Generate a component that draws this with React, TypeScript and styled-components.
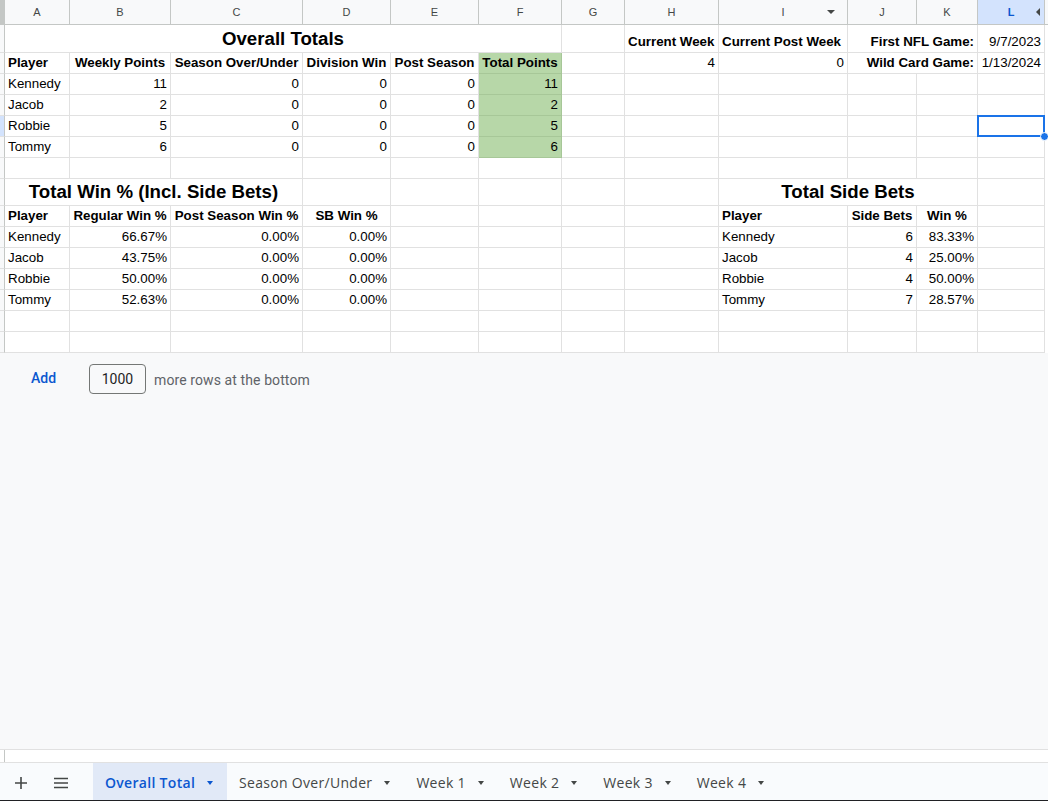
import React from "react";
import styled, { createGlobalStyle } from "styled-components";

const Global = createGlobalStyle`
  html, body { margin: 0; padding: 0; background: #ffffff; }
  body { font-family: "Liberation Sans", Arial, sans-serif; overflow: hidden; }
`;

const COLS = [5, 65, 101, 132, 88, 88, 83, 63, 94, 129, 69, 61, 67, 3];
const LETTERS = ["A", "B", "C", "D", "E", "F", "G", "H", "I", "J", "K", "L"];

const Page = styled.div`
  width: 1048px;
  height: 801px;
  display: flex;
  flex-direction: column;
  background: #f8f9fa;
`;

const Sheet = styled.div`
  display: grid;
  grid-template-columns: ${COLS.map((c) => `${c}px`).join(" ")};
  grid-template-rows: 25px 28px repeat(6, 21px) 27px repeat(7, 21px);
  background: #ffffff;
  flex: none;
`;

const Corner = styled.div`
  background: #c4c7c5;
  border-bottom: 1px solid #c4c7c5;
`;

const ColHead = styled.div<{ $active?: boolean }>`
  box-sizing: border-box;
  position: relative;
  display: flex;
  align-items: center;
  justify-content: center;
  background: ${(p) => (p.$active ? "#d3e3fd" : "#f8f9fa")};
  border-right: 1px solid #c4c7c5;
  border-bottom: 1px solid #c4c7c5;
  font: ${(p) => (p.$active ? 700 : 400)} 11px "Liberation Sans", Arial, sans-serif;
  color: ${(p) => (p.$active ? "#0b57d0" : "#444746")};
`;

const HeadFilter = styled.span`
  position: absolute;
  right: 12px;
  top: 10px;
  width: 0;
  height: 0;
  border-left: 4px solid transparent;
  border-right: 4px solid transparent;
  border-top: 4px solid #444746;
`;

const HeadArrow = styled.span`
  position: absolute;
  right: 4px;
  top: 8px;
  width: 0;
  height: 0;
  border-top: 4px solid transparent;
  border-bottom: 4px solid transparent;
  border-right: 4px solid #444746;
`;

const RowHead = styled.div<{ $active?: boolean }>`
  background: ${(p) => (p.$active ? "#d3e3fd" : "#f8f9fa")};
  border-right: 1px solid #c4c7c5;
  border-bottom: 1px solid #e1e1e1;
  box-sizing: border-box;
`;

const Filler = styled.div<{ $head?: boolean }>`
  background: ${(p) => (p.$head ? "#f8f9fa" : "#ffffff")};
  border-bottom: 1px solid ${(p) => (p.$head ? "#c4c7c5" : "#ffffff")};
  box-sizing: border-box;
`;

type Align = "left" | "center" | "right";

const Cell = styled.div<{
  $span: number;
  $align: Align;
  $bold: boolean;
  $title: boolean;
  $green: boolean;
  $selected: boolean;
}>`
  grid-column: span ${(p) => p.$span};
  box-sizing: border-box;
  position: relative;
  display: flex;
  align-items: flex-end;
  justify-content: ${(p) =>
    p.$align === "left" ? "flex-start" : p.$align === "right" ? "flex-end" : "center"};
  padding: 0 3px ${(p) => (p.$title ? "2px" : "3px")} 3px;
  background: ${(p) => (p.$green ? "#b7d7a8" : "#ffffff")};
  border-right: 1px solid ${(p) => (p.$green ? "#a7c798" : "#e1e1e1")};
  border-bottom: 1px solid ${(p) => (p.$green ? "#a7c798" : "#e1e1e1")};
  font-family: "Liberation Sans", Arial, sans-serif;
  font-size: ${(p) => (p.$title ? "18.67px" : "13.33px")};
  font-weight: ${(p) => (p.$bold ? 700 : 400)};
  color: #000000;
  white-space: nowrap;
  z-index: ${(p) => (p.$selected ? 2 : 0)};

  ${(p) =>
    p.$selected
      ? `
  &::before {
    content: "";
    position: absolute;
    left: -1px; top: -1px; right: -1px; bottom: -1px;
    border: 2px solid #1a73e8;
  }
  &::after {
    content: "";
    position: absolute;
    right: -5px; bottom: -5px;
    width: 7px; height: 7px;
    border-radius: 50%;
    background: #1a73e8;
    border: 1px solid #ffffff;
  }`
      : ""}
`;

type Spec = {
  t?: string;
  s?: number;
  a?: Align;
  b?: boolean;
  title?: boolean;
  g?: boolean;
  sel?: boolean;
};

const E: Spec = {};
const num = (t: string, g = false): Spec => ({ t, a: "right", g });
const txt = (t: string): Spec => ({ t, a: "left" });
const hd = (t: string, a: Align = "center", g = false): Spec => ({ t, a, b: true, g });

const blanks = (n: number): Spec[] => Array.from({ length: n }, () => ({}));

const players = ["Kennedy", "Jacob", "Robbie", "Tommy"];
const weekly = ["11", "2", "5", "6"];
const regWin = ["66.67%", "43.75%", "50.00%", "52.63%"];
const sideBets = ["6", "4", "4", "7"];
const sideWin = ["83.33%", "25.00%", "50.00%", "28.57%"];

const rows: Spec[][] = [
  [
    { t: "Overall Totals", s: 6, a: "center", b: true, title: true },
    E,
    hd("Current Week", "left"),
    hd("Current Post Week", "left"),
    { t: "First NFL Game:", s: 2, a: "right", b: true },
    num("9/7/2023"),
  ],
  [
    hd("Player", "left"),
    hd("Weekly Points"),
    hd("Season Over/Under"),
    hd("Division Win"),
    hd("Post Season"),
    hd("Total Points", "center", true),
    E,
    num("4"),
    num("0"),
    { t: "Wild Card Game:", s: 2, a: "right", b: true },
    num("1/13/2024"),
  ],
  ...players.map((p, i) => [
    txt(p),
    num(weekly[i]),
    num("0"),
    num("0"),
    num("0"),
    num(weekly[i], true),
    ...blanks(5),
    i === 2 ? { sel: true } : E,
  ]),
  blanks(12),
  [
    { t: "Total Win % (Incl. Side Bets)", s: 3, a: "center", b: true, title: true },
    ...blanks(5),
    { t: "Total Side Bets", s: 3, a: "center", b: true, title: true },
    E,
  ],
  [
    hd("Player", "left"),
    hd("Regular Win %"),
    hd("Post Season Win %"),
    hd("SB Win %"),
    ...blanks(4),
    hd("Player", "left"),
    hd("Side Bets"),
    hd("Win %"),
    E,
  ],
  ...players.map((p, i) => [
    txt(p),
    num(regWin[i]),
    num("0.00%"),
    num("0.00%"),
    ...blanks(4),
    txt(p),
    num(sideBets[i]),
    num(sideWin[i]),
    E,
  ]),
  blanks(12),
  blanks(12),
];

const AddArea = styled.div`
  flex: 1;
  background: #f8f9fa;
  display: flex;
  align-items: flex-start;
  padding: 11px 0 0 31px;
  font-family: Roboto, "Liberation Sans", Arial, sans-serif;
  font-size: 14px;
`;

const AddLink = styled.span`
  color: #0b57d0;
  font-weight: 500;
  line-height: 29px;
  width: 58px;
`;

const CountBox = styled.div`
  box-sizing: border-box;
  width: 57px;
  height: 30px;
  border: 1px solid #747775;
  border-radius: 4px;
  display: flex;
  align-items: center;
  justify-content: center;
  color: #1f1f1f;
  background: #f8f9fa;
`;

const MoreText = styled.span`
  color: #5f6368;
  line-height: 32px;
  margin-left: 8px;
  letter-spacing: 0.1px;
`;

const ScrollStrip = styled.div`
  height: 12px;
  background: #ffffff;
  border-top: 1px solid #e1e1e1;
  border-bottom: 1px solid #e1e1e1;
  display: flex;
`;

const ScrollMark = styled.div`
  width: 4px;
  border-right: 1px solid #c4c7c5;
`;

const TabBar = styled.div`
  height: 37px;
  background: #f9fbfd;
  display: flex;
  align-items: stretch;
  font-family: "Open Sans", Roboto, "Liberation Sans", Arial, sans-serif;
  font-size: 14px;
  font-weight: 500;
`;

const IconButton = styled.div<{ $w: number }>`
  width: ${(p) => p.$w}px;
  display: flex;
  align-items: center;
  justify-content: center;
  padding-top: 2px;
`;

const Tab = styled.div<{ $active?: boolean }>`
  display: flex;
  align-items: center;
  gap: 12px;
  padding: 2px 14px 0 12px;
  background: ${(p) => (p.$active ? "#e1e9f7" : "transparent")};
  color: ${(p) => (p.$active ? "#0b57d0" : "#444746")};
  font-weight: ${(p) => (p.$active ? 600 : 500)};
  letter-spacing: 0.3px;
`;

const Caret = styled.span<{ $active?: boolean }>`
  width: 0;
  height: 0;
  border-left: 3.5px solid transparent;
  border-right: 3.5px solid transparent;
  border-top: 4px solid ${(p) => (p.$active ? "#0b57d0" : "#444746")};
  margin-top: 1px;
`;

const BottomEdge = styled.div`
  height: 1px;
  background: #202124;
`;

const tabs = ["Overall Total", "Season Over/Under", "Week 1", "Week 2", "Week 3", "Week 4"];

export default function App() {
  return (
    <Page>
      <Global />
      <Sheet>
        <Corner />
        {LETTERS.map((l) => (
          <ColHead key={l} $active={l === "L"}>
            {l}
            {l === "I" && <HeadFilter />}
            {l === "L" && <HeadArrow />}
          </ColHead>
        ))}
        <Filler $head />
        {rows.map((r, ri) => (
          <React.Fragment key={ri}>
            <RowHead $active={ri === 4} />
            {r.map((c, ci) => (
              <Cell
                key={ci}
                $span={c.s ?? 1}
                $align={c.a ?? "left"}
                $bold={!!c.b}
                $title={!!c.title}
                $green={!!c.g}
                $selected={!!c.sel}
              >
                {c.t ?? ""}
              </Cell>
            ))}
            <Filler />
          </React.Fragment>
        ))}
      </Sheet>
      <AddArea>
        <AddLink>Add</AddLink>
        <CountBox>1000</CountBox>
        <MoreText>more rows at the bottom</MoreText>
      </AddArea>
      <ScrollStrip>
        <ScrollMark />
      </ScrollStrip>
      <TabBar>
        <IconButton $w={42}>
          <svg width="14" height="14" viewBox="0 0 14 14">
            <path d="M7 1v12M1 7h12" stroke="#444746" strokeWidth="1.6" fill="none" />
          </svg>
        </IconButton>
        <IconButton $w={38}>
          <svg width="16" height="12" viewBox="0 0 16 12">
            <path d="M1 1.5h14M1 6h14M1 10.5h14" stroke="#444746" strokeWidth="1.5" fill="none" />
          </svg>
        </IconButton>
        <IconButton $w={13} />
        {tabs.map((t, i) => (
          <Tab key={t} $active={i === 0}>
            {t}
            <Caret $active={i === 0} />
          </Tab>
        ))}
      </TabBar>
      <BottomEdge />
    </Page>
  );
}
